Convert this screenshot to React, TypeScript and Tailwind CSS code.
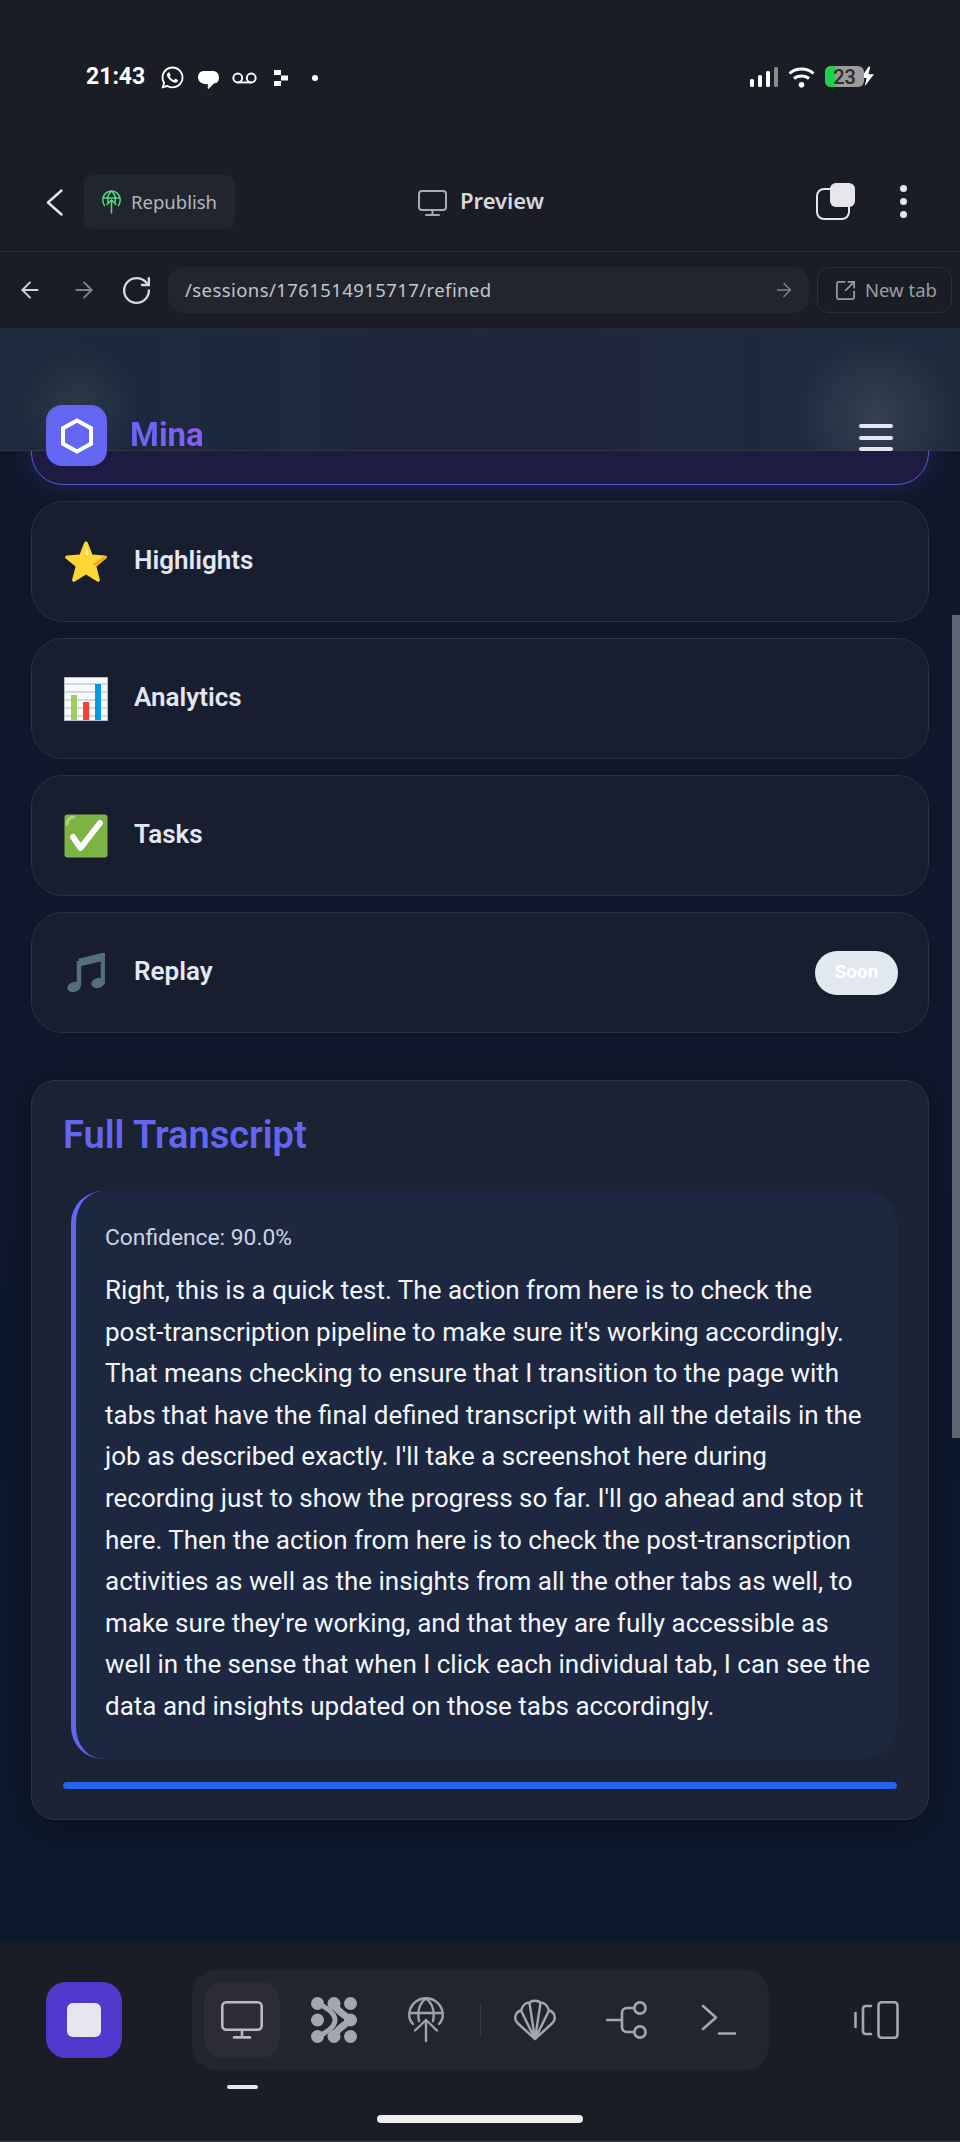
import React from "react";
import { ArrowLeft, ArrowRight, RotateCw, SquareArrowOutUpRight } from "lucide-react";
import { FaWhatsapp } from "react-icons/fa";

const Star = () => (
  <svg width="44" height="44" viewBox="0 0 44 44">
    <path d="M22 1.5 C23 1.5 23.6 2.2 24 3.2 L28.4 14.6 L41 15.4 C43 15.6 43.6 17.4 42.2 18.6 L32.4 26.6 L35.8 39.6 C36.2 41.4 34.6 42.4 33.2 41.6 L22 34.6 L10.8 41.6 C9.4 42.4 7.8 41.4 8.2 39.6 L11.6 26.6 L1.8 18.6 C0.4 17.4 1 15.6 3 15.4 L15.6 14.6 L20 3.2 C20.4 2.2 21 1.5 22 1.5 Z" fill="#fdd835" />
    <path d="M42 18.6 L31 26 L29 24 C33 22 37 18 41 16 Z" fill="#f4a50c" />
    <path d="M22 5 L24.5 14 C24 16 22 16 21.6 14 Z" fill="#fff59d" />
  </svg>
);

const Chart = () => (
  <svg width="44" height="44" viewBox="0 0 44 44">
    <rect x="0.5" y="0.5" width="43" height="43" fill="#fafafa" stroke="#b0bec5" />
    <g stroke="#c4cfd4" strokeWidth="1.4">
      <path d="M1 7H43M1 15H43M1 23H43M1 31H43M1 39H43" />
    </g>
    <rect x="7" y="18" width="6" height="25" fill="#9ccc65" />
    <rect x="19" y="25" width="6" height="18" fill="#f44336" />
    <rect x="31" y="7" width="6" height="36" fill="#039be5" />
  </svg>
);

const Check = () => (
  <svg width="44" height="44" viewBox="0 0 44 44">
    <rect x="0.5" y="0.5" width="43" height="43" rx="3" fill="#7cb342" />
    <path d="M3 10 C3 6 6 3 10 3" stroke="#aed581" strokeWidth="3" fill="none" strokeLinecap="round" />
    <path d="M9 23 L16.5 34 L36 9" stroke="#fafafa" strokeWidth="6" fill="none" strokeLinecap="round" strokeLinejoin="round" />
  </svg>
);

const Note = () => (
  <svg width="38" height="40" viewBox="0 0 38 40">
    <path d="M12 8 L36 2 V31" stroke="#546e7a" strokeWidth="4.5" fill="none" />
    <path d="M12 8 V33 " stroke="#546e7a" strokeWidth="4.5" fill="none" />
    <path d="M12 6.5 L36 1 V8 L12 13.5 Z" fill="#546e7a" />
    <ellipse cx="7" cy="34" rx="6.8" ry="5" fill="#546e7a" transform="rotate(-18 7 34)" />
    <ellipse cx="31" cy="30" rx="6.8" ry="5" fill="#546e7a" transform="rotate(-18 31 30)" />
  </svg>
);

const Row = ({ icon, label, badge }: { icon: React.ReactNode; label: string; badge?: boolean }) => (
  <div className="flex h-[121px] items-center rounded-[32px] border border-[#2a3142] bg-[#181e30] pl-[32px] pr-[30px]">
    <div className="flex w-[44px] items-center justify-center">{icon}</div>
    <span className="mb-[4px] ml-[26px] text-[26px] font-semibold leading-none text-[#e2e8f0]">{label}</span>
    {badge && (
      <span className="ml-auto flex h-[44px] w-[83px] items-center justify-center rounded-full bg-[#e2e8f0] text-[19px] font-bold text-white">
        Soon
      </span>
    )}
  </div>
);

export default function App() {
  return (
    <div className="flex h-[2142px] w-[960px] flex-col overflow-hidden bg-[#1a1d26] font-[Roboto,sans-serif]">
      {/* status bar */}
      <div className="flex h-[175px] shrink-0 items-start pl-[86px] pr-[86px] pt-[62px]">
        <span className="text-[23px] font-bold leading-[30px] text-white">21:43</span>
        <FaWhatsapp className="ml-[15px] mt-[3px] text-white" size={25} />
        <svg className="ml-[13px] mt-[9px]" width="21" height="19" viewBox="0 0 22 20">
          <path d="M6 0H16C19.5 0 22 3 22 7C22 11 19.5 13 17 13L11 19C10 19 10 17 10.5 14C4 14 0 11 0 6.5C0 3 2.5 0 6 0Z" fill="#fff" />
        </svg>
        <svg className="ml-[13px] mt-[9px]" width="25" height="14" viewBox="0 0 26 14" fill="none" stroke="#fff" strokeWidth="2">
          <circle cx="6" cy="7" r="4.6" />
          <circle cx="20" cy="7" r="4.6" />
          <path d="M6 11.6H20" />
        </svg>
        <svg className="ml-[17px] mt-[8px]" width="14" height="16" viewBox="0 0 14 16" fill="#fff">
          <rect x="0" y="0" width="7" height="5" />
          <rect x="7" y="5.5" width="7" height="5" />
          <rect x="0" y="11" width="7" height="5" />
        </svg>
        <span className="ml-[24px] mt-[13px] h-[6px] w-[6px] rounded-full bg-white" />
        <div className="ml-auto flex items-start">
          <svg className="mt-[5px]" width="28" height="20" viewBox="0 0 28 20">
            <rect x="0" y="12" width="4" height="8" rx="1.5" fill="#fff" />
            <rect x="8" y="8" width="4" height="12" rx="1.5" fill="#fff" />
            <rect x="16" y="4" width="4" height="16" rx="1.5" fill="#fff" />
            <rect x="24" y="0" width="4" height="20" rx="1.5" fill="#8a8a8a" />
          </svg>
          <svg className="ml-[10px] mt-[5px]" width="27" height="21" viewBox="0 0 27 21" fill="none" stroke="#fff" strokeWidth="3">
            <path d="M1.5 6.5C8 0.5 19 0.5 25.5 6.5" />
            <path d="M6 11.5C10 8 17 8 21 11.5" />
            <circle cx="13.5" cy="17.8" r="2.8" fill="#fff" stroke="none" />
          </svg>
          <div className="relative ml-[10px] mt-[4px] flex h-[21px] w-[39px] items-center justify-center overflow-hidden rounded-[6px] bg-[#9b9b9b]">
            <div className="absolute inset-y-0 left-0 w-[10px] bg-[#1ed14b]" />
            <span className="relative text-[20px] font-medium leading-none text-[#2b2b2b]">23</span>
          </div>
          <svg className="-ml-[3px] mt-[4px]" width="13" height="22" viewBox="0 0 14 22">
            <path d="M8 0L0 12H6L4 21L14 8H8L10 0Z" fill="#fff" />
          </svg>
        </div>
      </div>

      {/* preview row */}
      <div className="flex h-[77px] shrink-0 items-start border-b border-[#272a36] font-['Noto_Sans',sans-serif]">
        <svg className="ml-[46px] mt-[14px]" width="17" height="27" viewBox="0 0 17 27" fill="none" stroke="#e5e7eb" strokeWidth="2.4" strokeLinecap="round" strokeLinejoin="round">
          <path d="M15.5 1.5L2 13.5L15.5 25.5" />
        </svg>
        <div className="ml-[21px] flex h-[54px] w-[151px] items-center rounded-[8px] bg-[#22252e] pl-[18px]">
          <svg width="19" height="24" viewBox="0 0 19 24" fill="none" stroke="#4ade80" strokeWidth="1.5" strokeLinecap="round" strokeLinejoin="round">
            <path d="M2.5 15.5C1.2 14 .8 12.2.8 9.8a8.7 8.7 0 0 1 17.4 0c0 2.4-.4 4.2-1.7 5.7" />
            <path d="M1 8H18" />
            <path d="M6 13C5 7 7 3 9.5 1.2C12 3 14 7 13 13" />
            <path d="M9.5 23V10M5 14.5l4.5-4.5 4.5 4.5" />
          </svg>
          <span className="ml-[10px] text-[18.5px] leading-none text-[#b4b7bf]">Republish</span>
        </div>
        <svg className="ml-[183px] mt-[15px]" width="29" height="26" viewBox="0 0 29 26" fill="none" stroke="#a8abb3" strokeWidth="2" strokeLinecap="round">
          <rect x="1" y="1" width="27" height="19" rx="3" />
          <path d="M14.5 20V25M8 25H21" />
        </svg>
        <span className="ml-[13px] mt-[10px] text-[22px] font-semibold leading-[30px] text-[#d6d7dc]">Preview</span>
        <div className="relative ml-[272px] mt-[8px] h-[37px] w-[39px]">
          <div className="absolute bottom-0 left-0 h-[32px] w-[34px] rounded-[8px] border-[2.5px] border-[#e5e5ea]" />
          <div className="absolute right-0 top-0 h-[24px] w-[25px] rounded-[6px] bg-[#e5e5ea]" />
        </div>
        <div className="ml-[45px] mt-[10px] flex flex-col gap-[6px]">
          <span className="h-[7px] w-[7px] rounded-full bg-[#e5e5ea]" />
          <span className="h-[7px] w-[7px] rounded-full bg-[#e5e5ea]" />
          <span className="h-[7px] w-[7px] rounded-full bg-[#e5e5ea]" />
        </div>
      </div>

      {/* url row */}
      <div className="flex h-[77px] shrink-0 items-center border-b border-[#272a36] pl-[17px] font-['Noto_Sans',sans-serif]">
        <ArrowLeft size={26} color="#d1d5db" strokeWidth={1.8} />
        <ArrowRight className="ml-[28px]" size={26} color="#7d818b" strokeWidth={1.8} />
        <RotateCw className="ml-[23px]" size={33} color="#d8dade" strokeWidth={1.7} />
        <div className="ml-[15px] flex h-[46px] w-[641px] items-center rounded-[16px] bg-[#22252e] pl-[17px] pr-[14px]">
          <span className="text-[18.5px] leading-none tracking-[0.42px] text-[#c3c6cc]">/sessions/1761514915717/refined</span>
          <ArrowRight className="ml-auto" size={22} color="#7d818b" strokeWidth={1.6} />
        </div>
        <div className="ml-[8px] flex h-[46px] w-[135px] items-center rounded-[12px] border border-[#2d303b] pl-[16px]">
          <SquareArrowOutUpRight size={23} color="#9a9ca5" strokeWidth={1.8} />
          <span className="ml-[8px] text-[18.5px] leading-none text-[#9a9ca5]">New tab</span>
        </div>
      </div>

      {/* page */}
      <div className="relative min-h-0 flex-1 overflow-hidden bg-gradient-to-b from-[#0f172a] to-[#0d182e]">
        <div className="flex flex-col gap-[16px] px-[31px] pt-[35px]">
          <div className="h-[121px] rounded-[32px] border border-[#5a5ad8] bg-[#1e1b42] shadow-[0_0_28px_rgba(99,102,241,0.22)]" />
          <Row icon={<Star />} label="Highlights" />
          <Row icon={<Chart />} label="Analytics" />
          <Row icon={<Check />} label="Tasks" />
          <Row icon={<Note />} label="Replay" badge />
        </div>

        <div className="mx-[31px] mt-[47px] rounded-[24px] border border-[#2c3344] bg-[#1a2233] pb-[30px] pl-[31px] pr-[31px] pt-[31px] shadow-[0_8px_32px_rgba(0,0,0,0.3)]">
          <h2 className="text-[38px] font-semibold leading-[46px] text-[#6366f1]">Full Transcript</h2>
          <div className="ml-[8px] mt-[33px] h-[568px] rounded-[32px] border-l-[5px] border-[#6366f1] bg-[#1d2740] pb-[32px] pl-[29px] pr-[24px] pt-[33px]">
            <p className="text-[22.8px] leading-[28px] text-[#cbd5e1]">Confidence: 90.0%</p>
            <p className="mt-[18px] text-[26px] leading-[41.6px] text-[#f1f5f9]">
              Right, this is a quick test. The action from here is to check the post-transcription pipeline to make sure it's working accordingly. That means checking to ensure that I transition to the page with tabs that have the final defined transcript with all the details in the job as described exactly. I'll take a screenshot here during recording just to show the progress so far. I'll go ahead and stop it here. Then the action from here is to check the post-transcription activities as well as the insights from all the other tabs as well, to make sure they're working, and that they are fully accessible as well in the sense that when I click each individual tab, I can see the data and insights updated on those tabs accordingly.
            </p>
          </div>
          <div className="mt-[23px] h-[7px] rounded-full bg-[#2563eb]" />
        </div>

        {/* sticky header */}
        <div className="absolute inset-x-0 top-0 flex h-[122px] items-start border-b border-[#333845] bg-[radial-gradient(circle_at_77px_78px,rgba(255,255,255,0.07),transparent_62px),radial-gradient(circle_at_876px_88px,rgba(255,255,255,0.11),transparent_85px),linear-gradient(90deg,#1b2a3c,#1f2640_50%,#1c2a3c)] pl-[46px] pr-[67px] pt-[76px]">
          <div className="flex h-[61px] w-[61px] shrink-0 items-center justify-center rounded-[16px] bg-[#6366f1]">
            <svg width="36" height="36" viewBox="0 0 36 36" fill="none" stroke="#fff" strokeWidth="4">
              <path d="M18 2.5L32 10.2V25.8L18 33.5L4 25.8V10.2Z" />
            </svg>
          </div>
          <span className="ml-[23px] mt-[10px] bg-gradient-to-r from-[#6366f1] to-[#8b5cf6] bg-clip-text text-[33px] font-bold leading-[40px] text-transparent">Mina</span>
          <div className="ml-auto mt-[19px] flex w-[34px] flex-col gap-[7.5px]">
            <span className="h-[4px] rounded-full bg-[#e2e8f0]" />
            <span className="h-[4px] rounded-full bg-[#e2e8f0]" />
            <span className="h-[4px] rounded-full bg-[#e2e8f0]" />
          </div>
        </div>

        {/* scrollbar */}
        <div className="absolute right-0 top-[286px] h-[823px] w-[8px] bg-[#5f6472]" />
      </div>

      {/* bottom bar */}
      <div className="flex h-[199px] shrink-0 flex-col border-b border-[#3a3d45]">
        <div className="flex items-start pl-[46px] pt-[27px]">
          <div className="mt-[12px] flex h-[76px] w-[76px] items-center justify-center rounded-[20px] bg-[#5138cc]">
            <div className="h-[34px] w-[34px] rounded-[6px] bg-[#e6e6ee]" />
          </div>
          <div className="ml-[70px] flex h-[100px] items-center gap-[16px] rounded-[24px] bg-[#23252e] px-[12px]">
            <div className="flex h-[76px] w-[76px] items-center justify-center rounded-[18px] bg-[#2b2c38]">
              <svg width="42" height="38" viewBox="0 0 42 38" fill="none" stroke="#b8bbc2" strokeWidth="2.6" strokeLinecap="round">
                <rect x="1.3" y="1.3" width="39.4" height="27.4" rx="4" />
                <path d="M21 29V36M13 36.4H29" />
              </svg>
            </div>
            <div className="flex h-[76px] w-[76px] items-center justify-center">
              <svg width="46" height="46" viewBox="0 0 46 46" fill="#a2a8b0" stroke="none">
                <circle cx="6.5" cy="6.5" r="6.5" /><circle cx="23" cy="6.5" r="6.5" /><circle cx="39.5" cy="6.5" r="6.5" />
                <circle cx="6.5" cy="23" r="6.5" /><circle cx="39.5" cy="23" r="6.5" />
                <circle cx="6.5" cy="39.5" r="6.5" /><circle cx="23" cy="39.5" r="6.5" /><circle cx="39.5" cy="39.5" r="6.5" />
                <path d="M6.5 6.5C13 9 24 15 24 23C24 31 13 37 6.5 39.5" fill="none" stroke="#a2a8b0" strokeWidth="5" />
                <path d="M23 6.5C26 15 33 17 39.5 23C33 29 26 31 23 39.5" fill="none" stroke="#a2a8b0" strokeWidth="7" />
              </svg>
            </div>
            <div className="flex h-[76px] w-[76px] items-center justify-center">
              <svg width="36" height="46" viewBox="0 0 36 46" fill="none" stroke="#9ea3ab" strokeWidth="2.4" strokeLinecap="round" strokeLinejoin="round">
                <path d="M5 27C2.5 24.5 1.2 21.5 1.2 18a16.8 16.8 0 0 1 33.6 0c0 3.5-1.3 6.5-3.8 9" />
                <path d="M2 16H34" />
                <path d="M11 24C9 14 12 6 18 1.4C24 6 27 14 25 24" />
                <path d="M18 44V23M7 33.5L18 23L29 33.5" />
              </svg>
            </div>
            <div className="h-[30px] w-px bg-[#3a3d48]" />
            <div className="flex h-[76px] w-[76px] items-center justify-center">
              <svg width="42" height="42" viewBox="0 0 42 42" fill="none" stroke="#a2a8b0" strokeWidth="2.4" strokeLinejoin="round">
                <path d="M21 40L3.5 24C-0.5 20 1 13 7 11.5C8.5 5.5 13 3 15.5 4C17 1 25 1 26.5 4C29 3 33.5 5.5 35 11.5C41 13 42.5 20 38.5 24Z" />
                <path d="M21 40L7 11.5M21 40L15.5 4M21 40L26.5 4M21 40L35 11.5" />
              </svg>
            </div>
            <div className="flex h-[76px] w-[76px] items-center justify-center">
              <svg width="42" height="38" viewBox="0 0 42 38" fill="none" stroke="#a2a8b0" strokeWidth="2.6" strokeLinecap="round">
                <circle cx="34" cy="7" r="5.6" />
                <circle cx="34" cy="31" r="5.6" />
                <path d="M1 19H16M28.4 7H21C18 7 16 9 16 12V26C16 29 18 31 21 31H28.4" />
              </svg>
            </div>
            <div className="flex h-[76px] w-[76px] items-center justify-center">
              <svg width="36" height="32" viewBox="0 0 36 32" fill="none" stroke="#a2a8b0" strokeWidth="2.6" strokeLinecap="round" strokeLinejoin="round">
                <path d="M2 2L15 13.5L2 25M18 29.5H34" />
              </svg>
            </div>
          </div>
          <svg className="ml-[85px] mt-[31px]" width="45" height="38" viewBox="0 0 45 38" fill="none" stroke="#a2a8b0" strokeWidth="2.6" strokeLinecap="round">
            <path d="M1.5 12V26" />
            <path d="M17 5H12C10 5 9 6 9 8V30C9 32 10 33 12 33H17" />
            <rect x="24.5" y="1.3" width="19" height="35.4" rx="3" />
          </svg>
        </div>
        <div className="ml-[227px] mt-[15px] h-[4px] w-[31px] rounded-full bg-[#e8e8ec]" />
        <div className="mx-auto mt-[26px] h-[8px] w-[206px] rounded-full bg-[#eeeeee]" />
      </div>
    </div>
  );
}
